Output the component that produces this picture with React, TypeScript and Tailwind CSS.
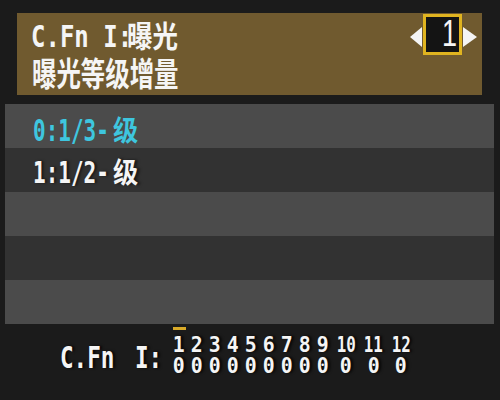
import React from "react";

const MONO = "font-['DejaVu_Sans_Mono',monospace]";
const CJK = "font-['Noto_Sans_CJK_SC','Noto_Sans_CJK_JP',sans-serif]";

const numbers = ["1", "2", "3", "4", "5", "6", "7", "8", "9", "10", "11", "12"];

function ArrowLeft() {
  return (
    <svg width="12" height="20" viewBox="0 0 12 20" className="block">
      <polygon points="12,0 12,20 0,10" fill="#f4f4f4" />
    </svg>
  );
}

function ArrowRight() {
  return (
    <svg width="14" height="20" viewBox="0 0 14 20" className="block">
      <polygon points="0,0 0,20 14,10" fill="#f4f4f4" />
    </svg>
  );
}

function Header() {
  return (
    <div className="ml-[17px] mt-[13px] w-[465px] h-[82px] bg-[#705a2f] flex text-[#f5f5f5]">
      <div className="flex-1 pl-[14px] pt-[6px]">
        <div className="flex items-baseline">
          <div className={`w-[96px] text-[30px] leading-[30px] font-bold ${MONO}`}>
            <span className="inline-block origin-left scale-x-[0.8] whitespace-nowrap">C.Fn I:</span>
          </div>
          <div className={`text-[30px] leading-[30px] font-bold ${CJK}`}>
            <span className="inline-block origin-left scale-x-[0.85] whitespace-nowrap">曝光</span>
          </div>
        </div>
        <div className={`mt-[4px] pl-[1px] text-[33px] leading-[33px] font-bold ${CJK}`}>
          <span className="inline-block origin-left scale-x-[0.74] whitespace-nowrap">曝光等级增量</span>
        </div>
      </div>
      <div className="mt-[1px] mr-[5px] flex items-start gap-[1px]">
        <div className="mt-[13px]">
          <ArrowLeft />
        </div>
        <div className="w-[39px] h-[41px] border-[3px] border-[#e0b420] bg-[#141414] flex items-start justify-end">
          <span className="mr-[2px] -mt-[1px] text-[36px] leading-[36px] font-['Liberation_Sans',sans-serif] text-[#f5f5f5]">
            <span className="inline-block origin-right scale-x-[0.75]">1</span>
          </span>
        </div>
        <div className="mt-[13px]">
          <ArrowRight />
        </div>
      </div>
    </div>
  );
}

function OptionText({ label, tone }: { label: string; tone: string }) {
  return (
    <div className={`flex items-baseline ${tone}`}>
      <div className={`w-[80px] text-[30px] leading-[30px] font-bold ${MONO}`}>
        <span className="inline-block origin-left scale-x-[0.7] whitespace-nowrap">{label}</span>
      </div>
      <div className={`text-[28px] leading-[28px] font-bold ${CJK}`}>
        <span className="inline-block origin-left scale-x-[0.9] whitespace-nowrap">级</span>
      </div>
    </div>
  );
}

function Options() {
  return (
    <div className="ml-[5px] mt-[9px] w-[489px]">
      <div className="h-[44px] bg-[#4b4b4b] pl-[28px] pt-[11px]">
        <OptionText label="0:1/3-" tone="text-[#3ec6df]" />
      </div>
      <div className="h-[44px] bg-[#323232] pl-[28px] pt-[9px] [text-shadow:3px_0_3px_rgba(0,0,0,0.55)]">
        <OptionText label="1:1/2-" tone="text-[#f5f5f5]" />
      </div>
      <div className="h-[44px] bg-[#4b4b4b]" />
      <div className="h-[44px] bg-[#323232]" />
      <div className="h-[44px] bg-[#4b4b4b]" />
    </div>
  );
}

function Summary() {
  return (
    <div className="h-[76px] flex text-[#f5f5f5] [text-shadow:3px_0_3px_rgba(0,0,0,0.8)]">
      <div className={`w-[170px] flex pt-[18px] text-[31px] leading-[31px] font-bold ${MONO}`}>
        <div className="ml-[60px] w-[78px]">
          <span className="inline-block origin-left scale-x-[0.73] whitespace-nowrap">C.Fn</span>
        </div>
        <div>
          <span className="inline-block origin-left scale-x-[0.73] whitespace-nowrap">I:</span>
        </div>
      </div>
      <div className="pt-[3px] grid grid-cols-[repeat(9,18px)_repeat(3,27.5px)]">
        {numbers.map((n, i) => (
          <div key={n} className="flex flex-col items-center">
            <div className={`h-[3px] w-[13px] ${i === 0 ? "bg-[#d9aa28]" : ""}`} />
            <div className={`mt-[4px] h-[21px] text-[22px] leading-[21px] font-bold ${MONO}`}>
              <span className={`inline-block whitespace-nowrap ${n.length > 1 ? "scale-x-[0.72]" : "scale-x-[0.9]"}`}>
                {n}
              </span>
            </div>
            <div className={`h-[21px] text-[22px] leading-[21px] font-bold ${MONO}`}>
              <span className="inline-block scale-x-[0.9]">0</span>
            </div>
          </div>
        ))}
      </div>
    </div>
  );
}

export default function App() {
  return (
    <div className="w-[500px] h-[400px] bg-[#1b1b1b] overflow-hidden flex flex-col">
      <Header />
      <Options />
      <Summary />
    </div>
  );
}
